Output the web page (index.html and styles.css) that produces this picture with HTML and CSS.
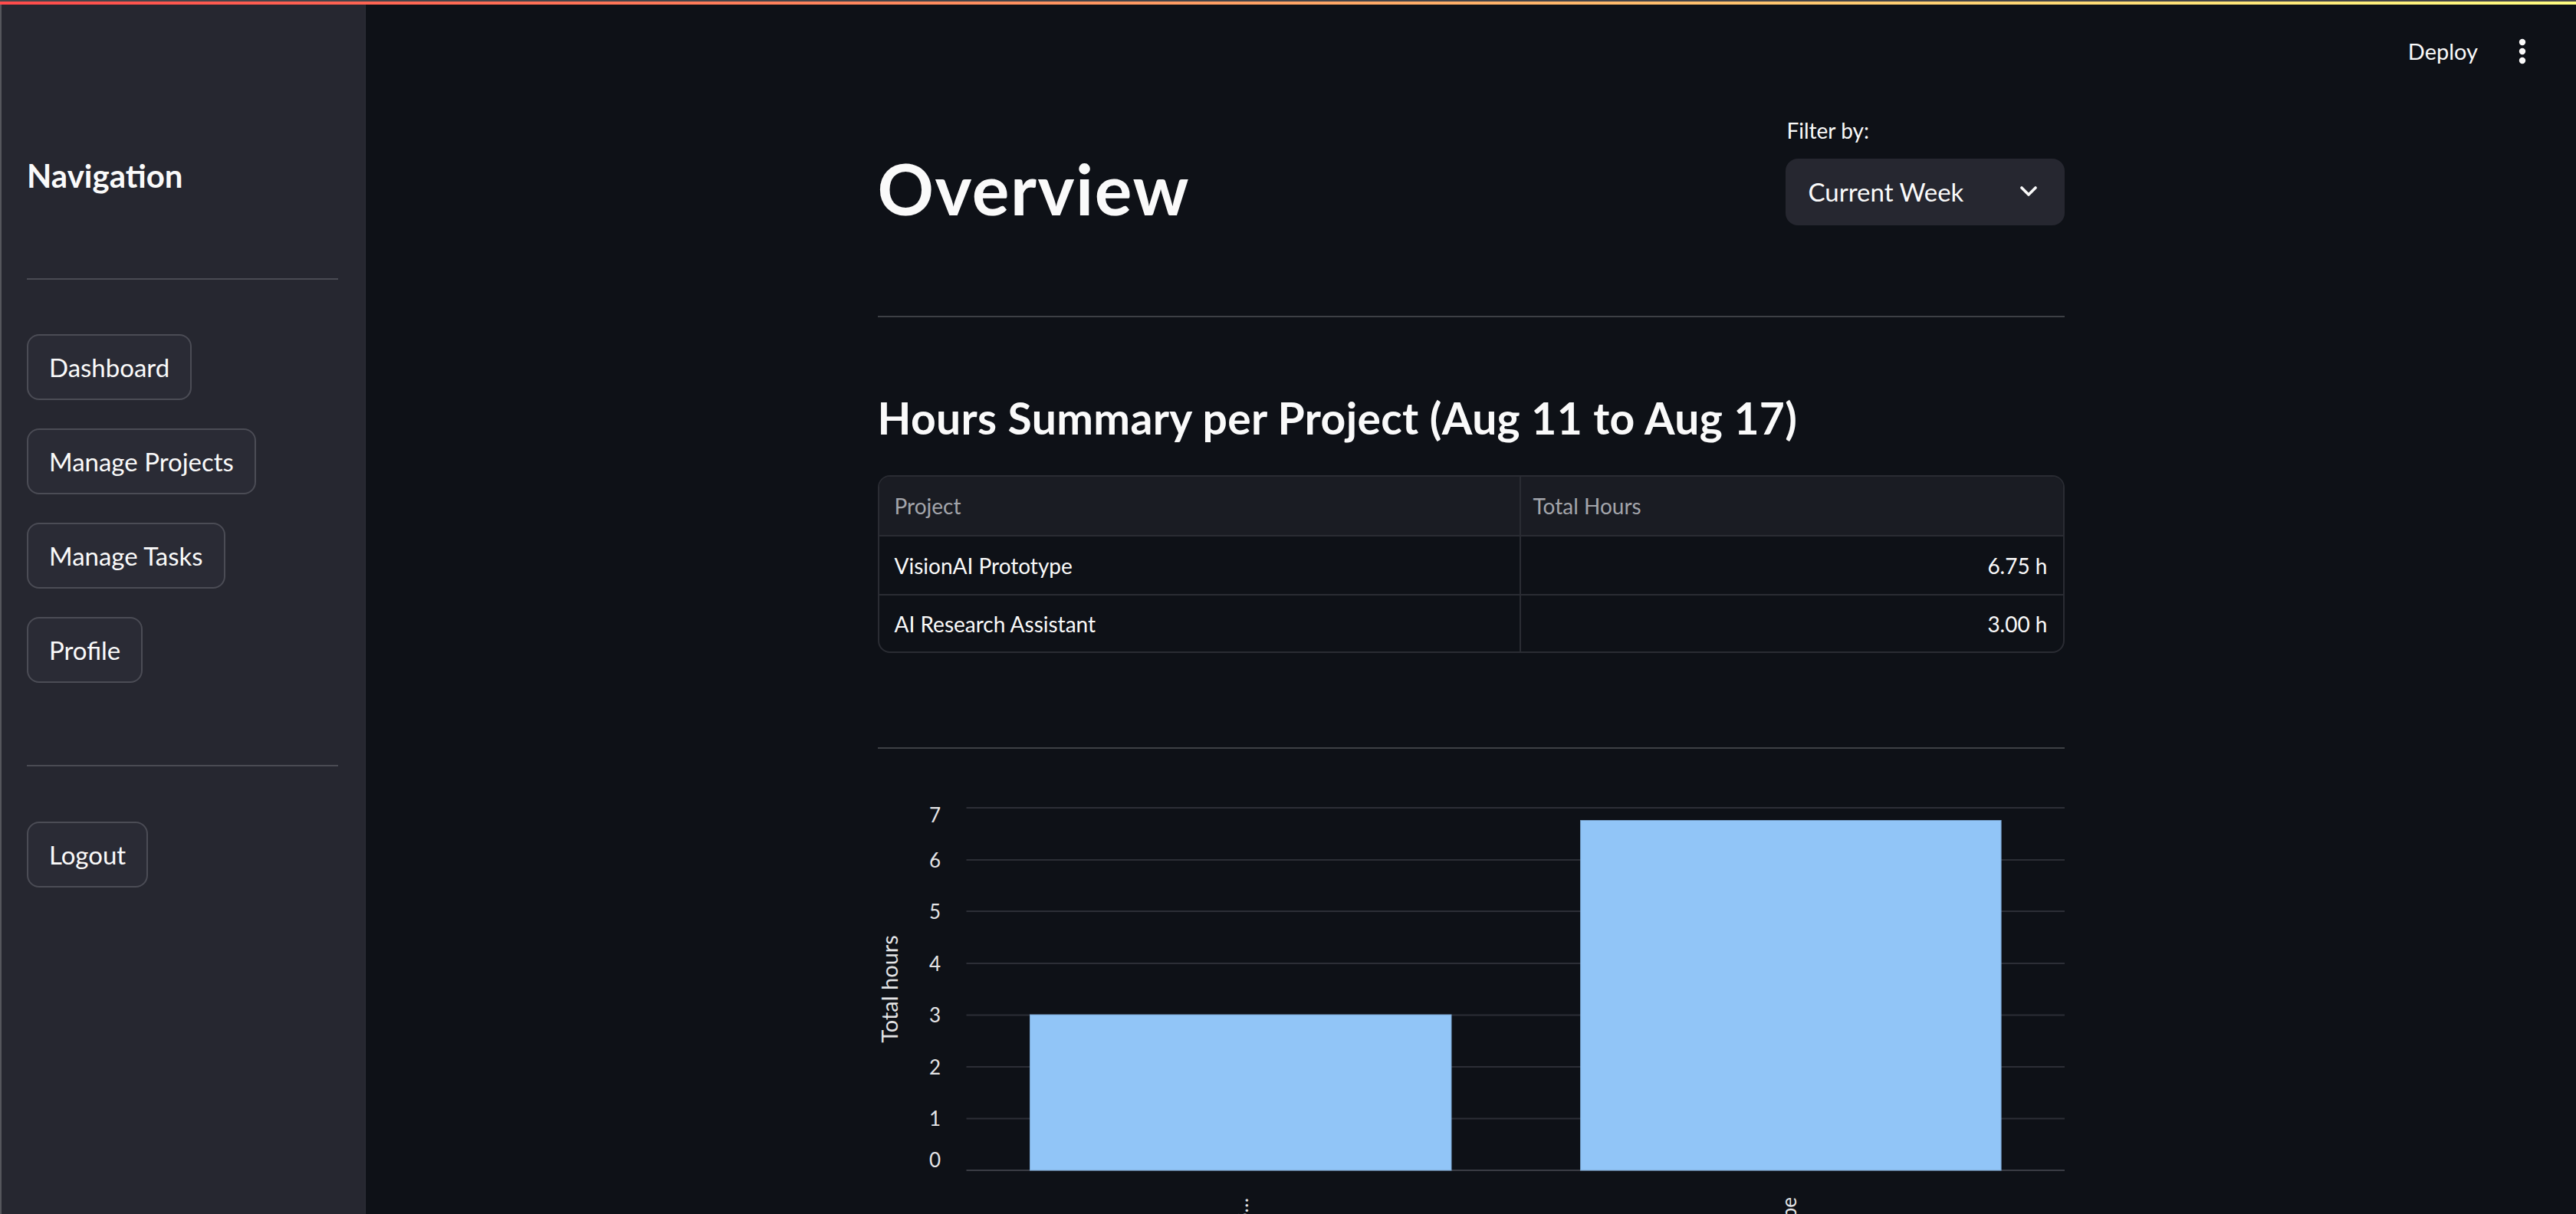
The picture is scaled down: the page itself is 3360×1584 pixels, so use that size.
FILE: index.html
```html
<!DOCTYPE html>
<html lang="en">
<head>
<meta charset="utf-8">
<title>Overview</title>
<link rel="stylesheet" href="styles.css">
</head>
<body>
<div class="topline"></div>
<div class="decoration"></div>
<div class="app">
  <aside class="sidebar">
    <h2 class="nav-title">Navigation</h2>
    <hr class="side-hr first">
    <div class="nav-buttons">
      <button class="nav-btn">Dashboard</button>
      <button class="nav-btn">Manage Projects</button>
      <button class="nav-btn">Manage Tasks</button>
      <button class="nav-btn">Profile</button>
    </div>
    <hr class="side-hr second">
    <button class="nav-btn logout">Logout</button>
  </aside>
  <main class="main">
    <div class="toolbar">
      <span class="deploy">Deploy</span>
      <svg class="kebab" width="10" height="34" viewBox="0 0 10 34"><circle cx="5" cy="5" r="4.2" fill="#fafafa"/><circle cx="5" cy="17" r="4.2" fill="#fafafa"/><circle cx="5" cy="29" r="4.2" fill="#fafafa"/></svg>
    </div>
    <div class="content">
      <div class="header-row">
        <h1 class="title">Overview</h1>
        <div class="filter">
          <div class="filter-label">Filter by:</div>
          <div class="select">
            <span>Current Week</span>
            <svg class="chevron" width="24" height="16" viewBox="0 0 24 16"><polyline points="3,3 12,12 21,3" fill="none" stroke="#fafafa" stroke-width="3.6" stroke-linecap="round" stroke-linejoin="round"/></svg>
          </div>
        </div>
      </div>
      <hr class="main-hr hr1">
      <h3 class="subtitle">Hours Summary per Project (Aug 11 to Aug 17)</h3>
      <div class="table">
        <div class="row head">
          <div class="cell">Project</div>
          <div class="cell">Total Hours</div>
        </div>
        <div class="row">
          <div class="cell">VisionAI Prototype</div>
          <div class="cell num">6.75 h</div>
        </div>
        <div class="row last">
          <div class="cell">AI Research Assistant</div>
          <div class="cell num">3.00 h</div>
        </div>
      </div>
      <hr class="main-hr hr2">
      <svg class="chart" width="1548" height="560" viewBox="0 0 1548 560">
        <g stroke="#2c2e36" stroke-width="2">
          <line x1="115.5" x2="1548" y1="24" y2="24"/>
          <line x1="115.5" x2="1548" y1="92" y2="92"/>
          <line x1="115.5" x2="1548" y1="159" y2="159"/>
          <line x1="115.5" x2="1548" y1="227" y2="227"/>
          <line x1="115.5" x2="1548" y1="294.5" y2="294.5"/>
          <line x1="115.5" x2="1548" y1="362" y2="362"/>
          <line x1="115.5" x2="1548" y1="429.5" y2="429.5"/>
          <line x1="115.5" x2="1548" y1="497" y2="497" stroke="#3a3c44"/>
        </g>
        <g class="ticks" text-anchor="end">
          <text x="82" y="43">7</text>
          <text x="82" y="101.5">6</text>
          <text x="82" y="168.5">5</text>
          <text x="82" y="236.5">4</text>
          <text x="82" y="304">3</text>
          <text x="82" y="371.5">2</text>
          <text x="82" y="439">1</text>
          <text x="82" y="493">0</text>
        </g>
        <text class="axis-title" x="26" y="260.5" text-anchor="middle" transform="rotate(-90 26 260.5)">Total hours</text>
        <rect x="198.5" y="294" width="549.5" height="203" fill="#91c5f7" stroke="#7aa6d1" stroke-width="1"/>
        <rect x="916.6" y="40.5" width="548.5" height="456.5" fill="#91c5f7" stroke="#7aa6d1" stroke-width="1"/>
        <text class="xlab" x="483" y="533" text-anchor="end" transform="rotate(-90 483 533)">AI Research Assis…</text>
        <text class="xlab" x="1198" y="532" text-anchor="end" transform="rotate(-90 1198 532)">VisionAI Prototype</text>
      </svg>
    </div>
  </main>
</div>
</body>
</html>
```
FILE: styles.css
```css
* { box-sizing: border-box; }
html, body {
  margin: 0;
  padding: 0;
  width: 3360px;
  height: 1584px;
  overflow: hidden;
  background: #0e1117;
  color: #fafafa;
  font-family: Lato, "Source Sans Pro", "Liberation Sans", sans-serif;
}
.topline { height: 2px; background: #44454a; }
.decoration {
  height: 4px;
  background: linear-gradient(90deg, #ff4b4b 0%, #fffd80 100%);
}
.app {
  display: flex;
  height: 1578px;
}
.sidebar {
  width: 477px;
  flex: 0 0 477px;
  background: #262730;
  border-left: 2px solid #55565c;
  border-right: 1px solid #2e2f38;
  padding: 198px 35px 0 33px;
  display: flex;
  flex-direction: column;
  align-items: flex-start;
}
.nav-title {
  margin: 0;
  font-size: 42px;
  line-height: 1.2;
  font-weight: 700;
  color: #fafafa;
}
.side-hr {
  width: 100%;
  height: 2px;
  border: 0;
  margin: 0;
  background: #4a4b53;
}
.side-hr.first { margin-top: 109px; }
.side-hr.second { margin-top: 107px; }
.nav-buttons {
  margin-top: 71px;
  display: flex;
  flex-direction: column;
  align-items: flex-start;
  gap: 37px;
}
.nav-btn {
  height: 86px;
  padding: 0 27px;
  border: 2px solid #4b4c55;
  border-radius: 16px;
  background: #2a2b35;
  color: #fafafa;
  font-family: Lato, "Source Sans Pro", "Liberation Sans", sans-serif;
  font-size: 33px;
  line-height: 1;
  display: flex;
  align-items: center;
}
.nav-btn.logout { margin-top: 72px; }
.main {
  flex: 1;
  position: relative;
  padding-top: 144px;
}
.toolbar {
  position: absolute;
  top: 41px;
  right: 65px;
  height: 40px;
  display: flex;
  align-items: center;
  gap: 53px;
}
.deploy {
  font-size: 29px;
  line-height: 1.2;
  color: #fafafa;
}
.kebab { display: block; }
.content {
  width: 1548px;
  margin: 0 auto;
}
.header-row {
  display: flex;
  justify-content: space-between;
  align-items: flex-start;
}
.title {
  margin: 41px 0 0 0;
  font-size: 91px;
  line-height: 1.2;
  font-weight: 700;
  letter-spacing: 1.6px;
}
.filter {
  width: 364px;
  margin-top: 4px;
}
.filter-label {
  font-size: 28px;
  line-height: 1.2;
  margin-bottom: 19px;
  padding-left: 2px;
}
.select {
  height: 87px;
  background: #262730;
  border-radius: 16px;
  padding: 0 35px 0 30px;
  display: flex;
  align-items: center;
  justify-content: space-between;
  font-size: 33px;
}
.chevron { display: block; }
.main-hr {
  border: 0;
  height: 2px;
  margin: 0;
  background: #3d4045;
}
.hr1 { margin-top: 112px; }
.subtitle {
  margin: 98px 0 0 0;
  font-size: 57px;
  line-height: 67px;
  font-weight: 700;
  letter-spacing: 0.35px;
}
.table {
  margin-top: 41px;
  border: 2px solid #2a2c33;
  border-radius: 16px;
  overflow: hidden;
}
.row {
  display: grid;
  grid-template-columns: 835px 1fr;
  height: 77px;
  border-bottom: 2px solid #2a2c33;
}
.row.head {
  height: 78px;
  background: #1a1c23;
  color: #a3a5ab;
}
.row.last { border-bottom: 0; height: 73px; }
.cell {
  display: flex;
  align-items: center;
  padding: 0 20px;
  font-size: 28px;
}
.cell + .cell { border-left: 2px solid #2a2c33; padding-left: 16px; }
.cell.num { justify-content: flex-end; padding-right: 20px; }
.hr2 { margin-top: 123px; }
.chart {
  display: block;
  margin-top: 53px;
  overflow: visible;
}
.ticks text {
  font-family: Lato, "Liberation Sans", sans-serif;
  font-size: 26px;
  fill: #e4e4e6;
}
.axis-title {
  font-family: Lato, "Liberation Sans", sans-serif;
  font-size: 29px;
  fill: #e4e4e6;
}
.xlab {
  font-family: Lato, "Liberation Sans", sans-serif;
  font-size: 26px;
  fill: #e4e4e6;
}
```
